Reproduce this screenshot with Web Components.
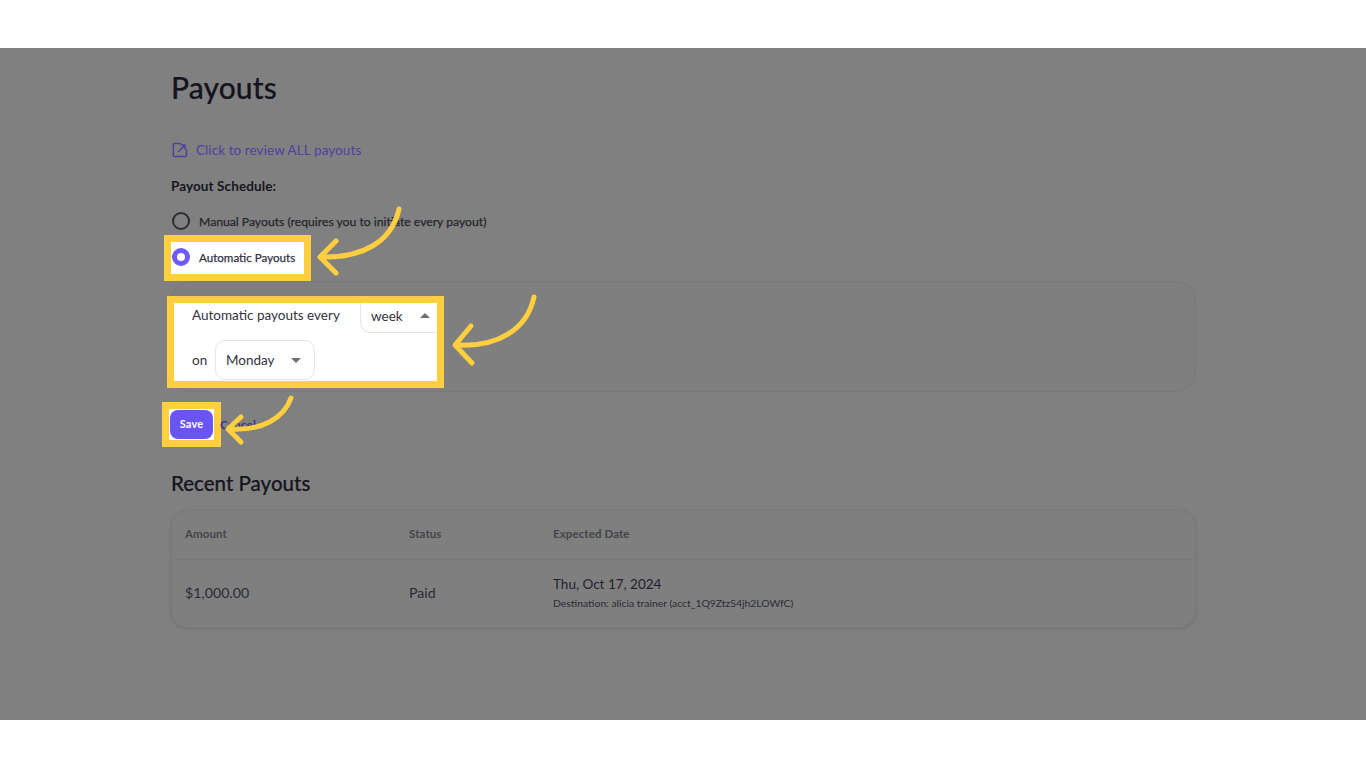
<!DOCTYPE html>
<html>
<head>
<meta charset="utf-8">
<title>Payouts</title>
<style>
  html, body { margin: 0; background: #fff; }
  body { font-family: Lato, "Open Sans", sans-serif; color: #1d1d28; }
</style>
</head>
<body>
<payouts-page></payouts-page>

<script>
class SpotBox extends HTMLElement {
  constructor() {
    super();
    this.attachShadow({ mode: 'open' }).innerHTML = `
      <style>
        :host {
          display: block;
          background: #fff;
          outline: 7px solid #ffcf3f;
          overflow: hidden;
          box-sizing: border-box;
        }
      </style>
      <slot></slot>
    `;
  }
}

class RadioOption extends HTMLElement {
  constructor() {
    super();
    const checked = this.hasAttribute('checked');
    this.attachShadow({ mode: 'open' }).innerHTML = `
      <style>
        :host {
          display: flex;
          align-items: center;
          gap: 9px;
          padding-left: 1px;
          font-size: ${checked ? '11.6px' : '12.2px'};
          white-space: nowrap;
          -webkit-text-stroke: .25px currentColor;
          color: ${checked ? '#33333f' : '#26262f'};
        }
        .dot {
          width: 18px;
          height: 18px;
          box-sizing: border-box;
          border-radius: 50%;
          flex: none;
          border: 2px solid #2c2c36;
        }
        .dot.on {
          border: 5px solid #6c5bf6;
          background: #fff;
        }
      </style>
      <span class="dot ${checked ? 'on' : ''}"></span>
      <span><slot></slot></span>
    `;
  }
}

class SelectBox extends HTMLElement {
  constructor() {
    super();
    const up = this.hasAttribute('open');
    this.attachShadow({ mode: 'open' }).innerHTML = `
      <style>
        :host {
          display: flex;
          align-items: center;
          justify-content: space-between;
          box-sizing: border-box;
          height: 40px;
          padding: 0 13px 0 10px;
          background: #fff;
          border: 1px solid #e2e4ea;
          border-radius: 10px;
          font-size: 13.5px;
          color: #33333f;
        }
        svg { display: block; }
      </style>
      <span><slot></slot></span>
      <svg width="10" height="5" viewBox="0 0 10 5">
        <path fill="#6f6f76" d="${up ? 'M0 5 5 0 10 5Z' : 'M0 0 10 0 5 5Z'}"/>
      </svg>
    `;
  }
}

class PayoutsTable extends HTMLElement {
  constructor() {
    super();
    this.attachShadow({ mode: 'open' }).innerHTML = `
      <style>
        :host {
          display: block;
          height: 118px;
          box-sizing: border-box;
          border: 1px solid #797979;
          border-radius: 16px;
          background: #7f7f7f;
          box-shadow: 0 1px 3px rgba(0,0,0,.12);
        }
        .row {
          display: grid;
          grid-template-columns: 224px 144px 1fr;
          padding-left: 13px;
          align-items: center;
          box-sizing: border-box;
        }
        .head {
          height: 49px;
          padding-bottom: 4px;
          border-bottom: 1px solid #787a7a;
          font-size: 11.5px;
          font-weight: 700;
          letter-spacing: .1px;
          color: #44444c;
        }
        .body {
          height: 68px;
          padding-bottom: 3px;
          font-size: 14.2px;
          color: #2b2b35;
        }
        .when { margin-bottom: 1px; }
        .date { font-size: 13.5px; line-height: 20px; color: #22222c; }
        .dest { font-size: 10.4px; line-height: 14px; margin-top: 2px; color: #2b2b35; }
      </style>
      <div class="row head">
        <span>Amount</span><span>Status</span><span>Expected Date</span>
      </div>
      <div class="row body">
        <span>$1,000.00</span>
        <span>Paid</span>
        <div class="when">
          <div class="date">Thu, Oct 17, 2024</div>
          <div class="dest">Destination: alicia trainer (acct_1Q9ZtzS4jh2LOWfC)</div>
        </div>
      </div>
    `;
  }
}

class ArrowLayer extends HTMLElement {
  constructor() {
    super();
    this.attachShadow({ mode: 'open' }).innerHTML = `
      <style>
        :host { position: absolute; left: 0; top: 0; pointer-events: none; }
        svg { display: block; }
        path { fill: none; stroke: #ffcf3f; stroke-width: 5; stroke-linecap: round; stroke-linejoin: round; }
      </style>
      <svg width="1366" height="768" viewBox="0 0 1366 768">
        <path d="M399 209C392 242 362 258 322 257"/>
        <path d="M336 241 320 257 336 273"/>
        <path d="M534 297C527 330 497 347 458 345"/>
        <path d="M471 326 455 345 472 363"/>
        <path d="M291 398C284 418 262 431 230 429"/>
        <path d="M241 417 228 429 241 442"/>
      </svg>
    `;
  }
}

class PayoutsPage extends HTMLElement {
  constructor() {
    super();
    this.attachShadow({ mode: 'open' }).innerHTML = `
      <style>
        :host { display: block; height: 768px; padding-top: 48px; box-sizing: border-box; position: relative; }
        .panel {
          height: 672px;
          box-sizing: border-box;
          background: #808080;
          padding: 20px 170px 0 171px;
        }
        h1 {
          margin: 0;
          height: 40px;
          font-size: 30px;
          line-height: 38px;
          font-weight: 500;
          letter-spacing: .1px;
          -webkit-text-stroke: .2px currentColor;
          color: #14141f;
        }
        .link {
          display: flex;
          align-items: center;
          gap: 8px;
          height: 20px;
          margin-top: 32px;
          padding-left: 1px;
          font-size: 13.5px;
          letter-spacing: .08px;
          color: #4f3fa0;
        }
        .link svg { display: block; }
        .label {
          height: 20px;
          margin-top: 18px;
          font-size: 13.5px;
          font-weight: 700;
          letter-spacing: .1px;
          color: #16161f;
        }
        .manual { height: 24px; margin-top: 11px; }
        .auto-spot { width: 133px; height: 32px; margin-top: 9px; display: flex; align-items: flex-start; }
        .auto-spot radio-option { flex: 1; height: 30px; }
        .card {
          height: 111px;
          margin-top: 7px;
          padding: 22px 0 0 3px;
          box-sizing: border-box;
          border: 1px solid #797979;
          border-radius: 20px;
          background: #7f7f7f;
        }
        .sched-spot { width: 263px; height: 78px; margin-top: -1px; margin-left: -1px; }
        .line {
          display: flex;
          padding-left: 18px;
          font-size: 13.5px;
          color: #33333f;
          white-space: nowrap;
        }
        .line.one { height: 24px; line-height: 24px; }
        .line.one span { width: 168px; flex: none; }
        .line.one select-box { width: 84px; flex: none; margin-top: -10px; padding-top: 6px; border-top: 0; }
        .line.two { margin-top: 13px; align-items: center; }
        .line.two span { width: 23px; flex: none; }
        .line.two select-box { width: 100px; flex: none; }
        .actions { display: flex; align-items: center; margin-top: 17px; height: 31px; }
        .save-spot { width: 45px; height: 31px; display: flex; align-items: center; justify-content: center; margin-left: -2px; }
        .save {
          width: 43px;
          height: 29px;
          line-height: 27px;
          text-align: center;
          border-radius: 8px;
          background: #6a54f2;
          color: #fff;
          font-size: 11px;
          font-weight: 700;
          letter-spacing: .2px;
        }
        .cancel { margin-left: 6px; font-size: 12px; font-weight: 700; color: #3d3288; }
        h2 {
          margin: 30px 0 14px;
          height: 26px;
          line-height: 26px;
          font-size: 20.5px;
          font-weight: 500;
          -webkit-text-stroke: .2px currentColor;
          color: #16161f;
        }
      </style>
      <div class="panel">
        <h1>Payouts</h1>
        <div class="link">
          <svg width="16" height="16" viewBox="0 0 16 16" fill="none" stroke="#4f3fa0" stroke-width="1.5" stroke-linecap="round" stroke-linejoin="round">
            <path d="M8.5 1.5H2.5a1.2 1.2 0 0 0-1.2 1.2v10.6a1.2 1.2 0 0 0 1.2 1.2h10.8a1.2 1.2 0 0 0 1.2-1.2V7.5"/>
            <path d="M6.5 9.5 12.8 3.2M9 3h4v4"/>
          </svg>
          <span>Click to review ALL payouts</span>
        </div>
        <div class="label">Payout Schedule:</div>
        <radio-option class="manual">Manual Payouts (requires you to initiate every payout)</radio-option>
        <spot-box class="auto-spot"><radio-option checked>Automatic Payouts</radio-option></spot-box>
        <div class="card">
          <spot-box class="sched-spot">
            <div class="line one">
              <span>Automatic payouts every</span>
              <select-box open>week</select-box>
            </div>
            <div class="line two">
              <span>on</span>
              <select-box>Monday</select-box>
            </div>
          </spot-box>
        </div>
        <div class="actions">
          <spot-box class="save-spot"><div class="save">Save</div></spot-box>
          <span class="cancel">Cancel</span>
        </div>
        <h2>Recent Payouts</h2>
        <payouts-table></payouts-table>
      </div>
      <arrow-layer></arrow-layer>
    `;
  }
}

customElements.define('spot-box', SpotBox);
customElements.define('radio-option', RadioOption);
customElements.define('select-box', SelectBox);
customElements.define('payouts-table', PayoutsTable);
customElements.define('arrow-layer', ArrowLayer);
customElements.define('payouts-page', PayoutsPage);
</script>
</body>
</html>
